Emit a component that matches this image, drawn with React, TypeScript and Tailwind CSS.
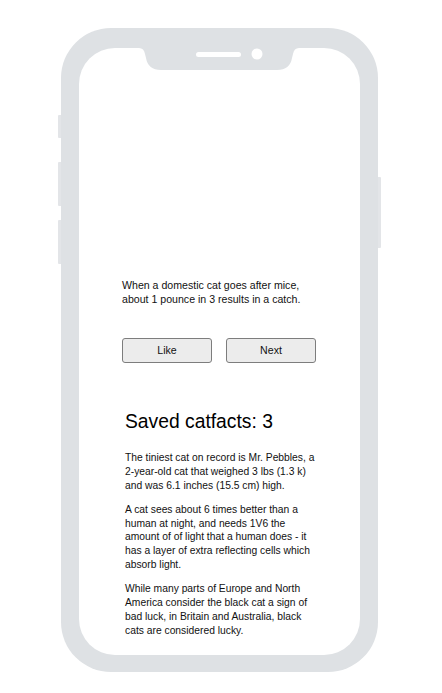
const facts = [
  [
    "The tiniest cat on record is Mr. Pebbles, a",
    "2-year-old cat that weighed 3 lbs (1.3 k)",
    "and was 6.1 inches (15.5 cm) high.",
  ],
  [
    "A cat sees about 6 times better than a",
    "human at night, and needs 1V6 the",
    "amount of of light that a human does - it",
    "has a layer of extra reflecting cells which",
    "absorb light.",
  ],
  [
    "While many parts of Europe and North",
    "America consider the black cat a sign of",
    "bad luck, in Britain and Australia, black",
    "cats are considered lucky.",
  ],
];

function Notch() {
  return (
    <svg
      className="absolute left-[60px] top-0"
      width="160"
      height="22"
      viewBox="0 0 160 22"
    >
      <path
        d="M0 0 Q5 0 6 6 L7 10 Q9 22 22 22 L138 22 Q151 22 153 10 L154 6 Q155 0 160 0 Z"
        fill="#dee1e4"
      />
      <rect x="57" y="4" width="45" height="5" rx="2.5" fill="#ffffff" />
      <circle cx="118" cy="6" r="5.5" fill="#ffffff" />
    </svg>
  );
}

export default function App() {
  return (
    <div
      className="min-h-[693px] w-[442px] bg-white pt-[28px] pl-[61px] text-[#111]"
      style={{ fontFamily: '"Liberation Sans", Arial, sans-serif' }}
    >
      <div className="relative h-[644px] w-[317px] rounded-[50px] bg-[#dee1e4] px-[18px] pt-[20px] pb-[17px]">
        <div className="absolute -left-[3px] top-[87px] h-[23px] w-[3px] rounded-l-[1px] bg-[#e3e5e8]" />
        <div className="absolute -left-[3px] top-[134px] h-[44px] w-[3px] rounded-l-[1px] bg-[#e3e5e8]" />
        <div className="absolute -left-[3px] top-[192px] h-[44px] w-[3px] rounded-l-[1px] bg-[#e3e5e8]" />
        <div className="absolute -right-[3px] top-[149px] h-[71px] w-[3px] rounded-r-[1px] bg-[#e3e5e8]" />

        <div className="relative flex h-full flex-col rounded-[36px] bg-white pt-[230px]">
          <Notch />

          <p className="pl-[43px] text-[10.6px] leading-[14px]">
            When a domestic cat goes after mice,
            <br />
            about 1 pounce in 3 results in a catch.
          </p>

          <div className="mt-[32px] flex gap-[14px] pl-[43px]">
            <button className="h-[25px] w-[90px] rounded-[3px] border border-[#7d7d7d] bg-[#ececec] text-[10.6px] text-[#111]">
              Like
            </button>
            <button className="h-[25px] w-[90px] rounded-[3px] border border-[#7d7d7d] bg-[#ececec] text-[10.6px] text-[#111]">
              Next
            </button>
          </div>

          <h2 className="mt-[47px] pl-[46px] text-[19.3px] leading-[24px] text-black">
            Saved catfacts: 3
          </h2>

          <div className="mt-[17px] flex flex-col gap-[10.5px] pl-[46px]">
            {facts.map((lines, i) => (
              <p key={i} className="text-[10.3px] leading-[13.8px]">
                {lines.map((line, j) => (
                  <span key={j} className="block">
                    {line}
                  </span>
                ))}
              </p>
            ))}
          </div>
        </div>
      </div>
    </div>
  );
}
